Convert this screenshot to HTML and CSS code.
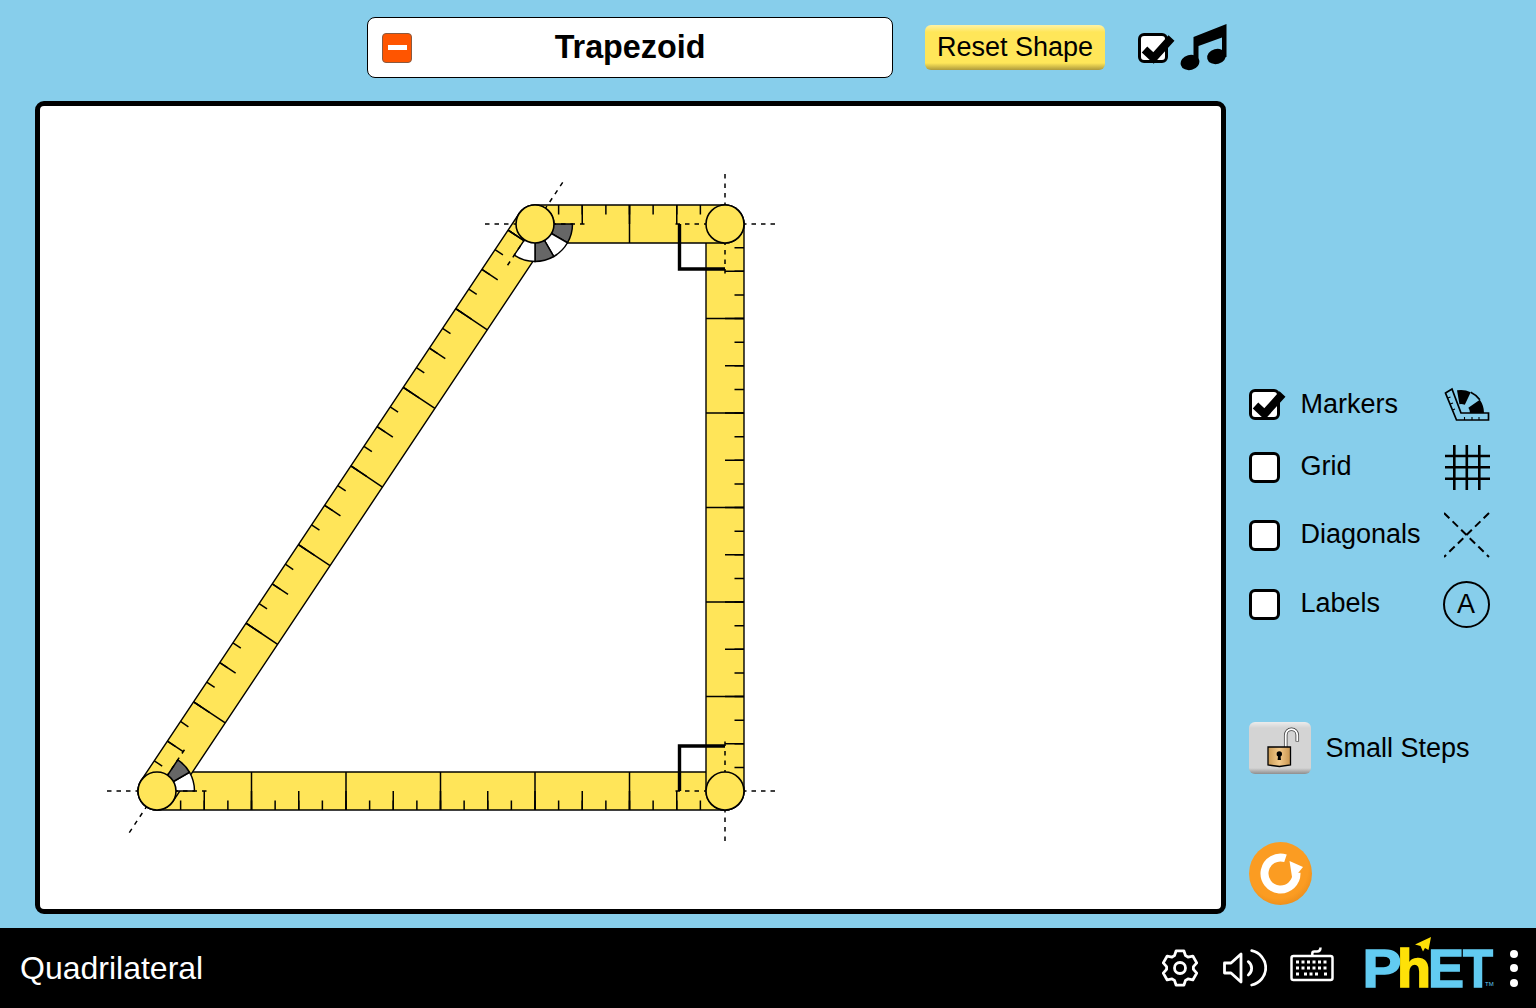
FILE: index.html
```html
<!DOCTYPE html>
<html>
<head>
  <meta charset="utf-8">
  <title>Quadrilateral</title>
  <link rel="stylesheet" href="styles.css">
</head>
<body>
  <div id="app">
    <div id="sim">
      <div id="play-column">
        <div id="top-row">
          <div class="title-panel">
            <span class="minus-button"><span class="minus-bar"></span></span>
            <span class="title-text">Trapezoid</span>
          </div>
          <button class="reset-shape">Reset Shape</button>
          <span class="check-box small checked">
            <svg class="check-mark" viewBox="0 0 40 36"><path d="M3.500 16.500 L12.500 25 L30.500 5"/></svg>
          </span>
          <svg class="music" viewBox="1180 25 48 47">
            <ellipse cx="1190" cy="63.500" rx="9.500" ry="7.500" transform="rotate(-15 1190 63.500)"/>
            <ellipse cx="1216.500" cy="57.500" rx="9.500" ry="7.500" transform="rotate(-15 1216.500 57.500)"/>
            <path d="M1193.500 64 V38 L1226.500 25 V58 H1222 V38.500 L1198.500 47 V64 Z"/>
          </svg>
        </div>

        <div id="board">
          <svg id="shape" viewBox="40 106 1181 803">
            <!-- each side runs along local x, ticks hang off local -y -->
            <g transform="translate(157 791) scale(1 -1)">
              <line class="edge" x2="568"/><line class="fill" x2="568"/>
              <line class="tick-q" x1="22.875" x2="568" y1="-14.250" y2="-14.250"/>
              <line class="tick-h" x1="46.500" x2="568" y1="-9.500" y2="-9.500"/>
              <line class="tick-f" x1="93.750" x2="568"/>
            </g>
            <g transform="translate(725 224) rotate(90)">
              <line class="edge" x2="567"/><line class="fill" x2="567"/>
              <line class="tick-q" x1="22.875" x2="567" y1="-14.250" y2="-14.250"/>
              <line class="tick-h" x1="46.500" x2="567" y1="-9.500" y2="-9.500"/>
              <line class="tick-f" x1="93.750" x2="567"/>
            </g>
            <g transform="translate(535 224)">
              <line class="edge" x2="190"/><line class="fill" x2="190"/>
              <line class="tick-q" x1="22.875" x2="190" y1="-14.250" y2="-14.250"/>
              <line class="tick-h" x1="46.500" x2="190" y1="-9.500" y2="-9.500"/>
              <line class="tick-f" x1="93.750" x2="190"/>
            </g>
            <g transform="translate(157 791) rotate(-56.310)">
              <line class="edge" x2="681.400"/><line class="fill" x2="681.400"/>
              <line class="tick-q" x1="22.875" x2="681.400" y1="-14.250" y2="-14.250"/>
              <line class="tick-h" x1="46.500" x2="681.400" y1="-9.500" y2="-9.500"/>
              <line class="tick-f" x1="93.750" x2="681.400"/>
            </g>

            <!-- angle wedges -->
            <path class="wedge-dark" d="M535 224 L572.500 224 A37.500 37.500 0 0 1 567.500 242.750 Z"/>
            <path class="wedge-light" d="M535 224 L567.500 242.750 A37.500 37.500 0 0 1 553.750 256.500 Z"/>
            <path class="wedge-dark" d="M535 224 L553.750 256.500 A37.500 37.500 0 0 1 535 261.500 Z"/>
            <path class="wedge-light" d="M535 224 L535 261.500 A37.500 37.500 0 0 1 514.200 255.200 Z"/>
            <path class="wedge-light" d="M157 791 L194.500 791 A37.500 37.500 0 0 0 189.500 772.250 Z"/>
            <path class="wedge-dark" d="M157 791 L189.500 772.250 A37.500 37.500 0 0 0 177.800 759.800 Z"/>

            <!-- vertex guides -->
            <line class="guide" x1="485" y1="224" x2="585" y2="224"/>
            <line class="guide" x1="562.700" y1="182.400" x2="507.300" y2="265.600"/>
            <line class="guide" x1="775" y1="224" x2="675" y2="224"/>
            <line class="guide" x1="725" y1="174" x2="725" y2="274"/>
            <line class="guide" x1="775" y1="791" x2="675" y2="791"/>
            <line class="guide" x1="725" y1="841" x2="725" y2="741"/>
            <line class="guide" x1="107" y1="791" x2="207" y2="791"/>
            <line class="guide" x1="129.300" y1="832.600" x2="184.700" y2="749.400"/>

            <!-- right angle markers -->
            <path class="right-angle" d="M725 269 H679.500 V224"/>
            <path class="right-angle" d="M725 746 H679.500 V791"/>

            <circle class="vertex" cx="535" cy="224" r="19"/>
            <circle class="vertex" cx="725" cy="224" r="19"/>
            <circle class="vertex" cx="725" cy="791" r="19"/>
            <circle class="vertex" cx="157" cy="791" r="19"/>
          </svg>
        </div>
      </div>

      <div id="controls">
        <div class="toggles">
          <div class="toggle">
            <span class="check-box checked">
              <svg class="check-mark" viewBox="0 0 40 36"><path d="M3.500 16.500 L12.500 25 L30.500 5"/></svg>
            </span>
            <span class="toggle-label">Markers</span>
            <svg class="icon-markers" viewBox="1444 387 46 35">
              <path class="wedge-ink" d="M1484 413 A23 23 0 0 0 1479.840 399.810 L1468.370 407.840 A9 9 0 0 1 1470 413 Z"/>
              <path class="wedge-ink" d="M1470.720 392.150 A23 23 0 0 0 1457 390.350 L1459.440 404.140 A9 9 0 0 1 1464.800 404.840 Z"/>
              <path class="ruler-line" d="M1479.840 399.810 A23 23 0 0 0 1470.720 392.150"/>
              <path class="ruler-line" d="M1445.500 393 L1452 389 L1461 413 H1488.500 V420 H1456.500 Z"/>
              <path class="ruler-line thin" d="M1447.800 398 L1450.500 397 M1450.200 404 L1453 403 M1452.500 410 L1455 409 M1464.500 420 V417 M1472 420 V417 M1479 420 V417"/>
            </svg>
          </div>
          <div class="toggle">
            <span class="check-box"></span>
            <span class="toggle-label">Grid</span>
            <svg class="icon-grid" viewBox="1444 444 46 45">
              <path d="M1454.300 444 V489 M1466.800 444 V489 M1479.300 444 V489 M1445 455 H1490 M1445 466.300 H1490 M1445 477.700 H1490"/>
            </svg>
          </div>
          <div class="toggle">
            <span class="check-box"></span>
            <span class="toggle-label">Diagonals</span>
            <svg class="icon-diagonals" viewBox="1444 512 46 46">
              <path d="M1444 513 L1489 557 M1489 513 L1444 557"/>
            </svg>
          </div>
          <div class="toggle">
            <span class="check-box"></span>
            <span class="toggle-label">Labels</span>
            <span class="icon-label">A</span>
          </div>
        </div>

        <div class="small-steps">
          <div class="lock-button">
            <svg class="lock" viewBox="1260 726 40 44">
              <defs>
                <linearGradient id="brass" x1="0" y1="0" x2="1" y2="0">
                  <stop offset="0" stop-color="#c99a55"/>
                  <stop offset="0.5" stop-color="#f3c98a"/>
                  <stop offset="1" stop-color="#c8944f"/>
                </linearGradient>
              </defs>
              <path class="shackle-outer" d="M1285.700 747 V735 A5.800 5.800 0 0 1 1297.300 735 V741.500"/>
              <path class="shackle-inner" d="M1285.700 747 V735 A5.800 5.800 0 0 1 1297.300 735 V741"/>
              <path class="lock-body" fill="url(#brass)" d="M1268 747 H1290.500 V765 L1279.500 766.500 L1268 765 Z"/>
              <circle cx="1279.300" cy="754" r="2.700"/>
              <path d="M1278.300 754 H1280.300 L1281 760 H1277.600 Z"/>
            </svg>
          </div>
          <span class="toggle-label">Small Steps</span>
        </div>

        <div class="reset-all">
          <svg class="reset-arrow" viewBox="1248.500 842 63 63">
            <path d="M1285 858.300 A16 16 0 1 0 1296 873"/>
            <polygon points="1289,861 1302.500,867 1292,880"/>
          </svg>
        </div>
      </div>
    </div>

    <div id="navbar">
      <span class="sim-name">Quadrilateral</span>
      <svg class="nav-gear" viewBox="0 0 36 38">
        <polygon points="14.06,1.95 21.94,1.95 23.5,6.66 25.94,8.08 30.8,7.06 34.73,13.88 31.43,17.58 31.43,20.42 34.73,24.12 30.8,30.94 25.94,29.92 23.5,31.34 21.94,36.05 14.06,36.05 12.5,31.34 10.06,29.92 5.2,30.94 1.27,24.12 4.57,20.42 4.57,17.58 1.27,13.88 5.2,7.06 10.06,8.08 12.5,6.66"/>
        <circle cx="18" cy="19" r="5.500"/>
      </svg>
      <svg class="nav-sound" viewBox="1222 949 45 38">
        <path d="M1224.500 963 H1231 L1241 954 V982 L1231 973 H1224.500 Z"/>
        <path d="M1248.300 961.700 A8.300 8.300 0 0 1 1248.300 975"/>
        <path d="M1251.700 950.700 A17.500 17.500 0 0 1 1251.700 985"/>
      </svg>
      <svg class="nav-keys" viewBox="1290 946 44 36">
        <rect class="keys-case" x="1291.500" y="956" width="41" height="24" rx="2"/>
        <path class="keys-case" d="M1312.300 956 V953.500 Q1312.300 951.500 1314.300 951.500 H1317 Q1320.500 951.500 1320.500 947.500"/>
        <path class="keys-row" d="M1296 962 H1329 M1296 968 H1329"/>
        <path class="keys-row" d="M1296 974 H1300 M1304 974 H1320 M1324 974 H1329"/>
      </svg>
      <svg class="nav-logo" viewBox="1360 933 136 70">
        <text class="logo-blue" x="1362.500" y="987" textLength="39" lengthAdjust="spacingAndGlyphs">P</text>
        <text class="logo-yellow" x="1397" y="987" textLength="34" lengthAdjust="spacingAndGlyphs">h</text>
        <text class="logo-blue" x="1428" y="987" textLength="36" lengthAdjust="spacingAndGlyphs">E</text>
        <text class="logo-blue" x="1463" y="987" textLength="30" lengthAdjust="spacingAndGlyphs">T</text>
        <polygon class="logo-plane" points="1431,937 1415,944.500 1420.500,946 1423,951.500 1425,948 1428.500,950"/>
        <text class="logo-tm" x="1485" y="986">TM</text>
      </svg>
      <div class="nav-dots"><span></span><span></span><span></span></div>
    </div>
  </div>
</body>
</html>
```

FILE: styles.css
```css
*, *:before, *:after { box-sizing: border-box; }
html, body { height: 100%; }
body { margin: 0; padding: 0; font-family: "Liberation Sans", Arial, sans-serif; background-color: #87ceeb; color: #000; overflow: hidden; }
#app { display: flex; flex-direction: column; height: 100%; }
#sim { flex: 1; display: flex; flex-direction: row; }
#play-column { width: 1191px; margin-left: 35px; display: flex; flex-direction: column; }

/* top row */
#top-row { height: 95px; margin-bottom: 6px; padding-left: 332px; display: flex; align-items: center; }
#top-row > * { flex-shrink: 0; }
.title-panel {
  width: 526px;
  height: 61px;
  padding: 0 14px;
  display: grid;
  grid-template-columns: 30px 1fr 30px;
  align-items: center;
  background-color: #fff;
  border: 1.5px solid #000;
  border-radius: 8px;
}
.minus-button {
  width: 30px;
  height: 30px;
  display: flex;
  align-items: center;
  justify-content: center;
  background-color: #ff5500;
  border: 1px solid #8a5a40;
  border-radius: 4px;
}
.minus-bar { width: 19px; height: 5px; background-color: #fff; }
.title-text { font-size: 32.300px; font-weight: bold; text-align: center; }
.reset-shape {
  width: 180px;
  height: 45px;
  margin-left: 32px;
  padding: 0;
  font-family: inherit;
  font-size: 27px;
  color: #000;
  border: 0;
  border-radius: 6px;
  background: linear-gradient(to bottom, #fff2a6 0, #ffe659 7px, #ffe659 38px, #ae9a3c 45px);
}
.music { width: 48px; height: 47px; margin-left: 12px; }

/* checkboxes */
.check-box {
  position: relative;
  display: block;
  width: 31px;
  height: 31px;
  background-color: #fff;
  border: 3px solid #000;
  border-radius: 6px;
}
.check-box.small { width: 30px; height: 30px; margin-left: 33px; }
.check-mark { position: absolute; left: 0; top: -3px; width: 40px; height: 36px; overflow: visible; }
.check-mark path { fill: none; stroke: #000; stroke-width: 8px; stroke-linejoin: miter; }

/* board */
#board { height: 813px; background-color: #fff; border: 5px solid #000; border-radius: 9px; overflow: hidden; }
#shape { display: block; width: 1181px; height: 803px; }
#shape .edge { stroke: #000; stroke-width: 39.400px; stroke-linecap: round; }
#shape .fill { stroke: #ffe559; stroke-width: 36.600px; stroke-linecap: round; }
.tick-q, .tick-h, .tick-f { stroke: #000; }
.tick-q { stroke-width: 9.500px; stroke-dasharray: 1.500 22.125; }
.tick-h { stroke-width: 19px; stroke-dasharray: 1.500 45.750; }
.tick-f { stroke-width: 38px; stroke-dasharray: 1.500 93; }
.wedge-dark, .wedge-light { stroke: #000; stroke-width: 1.500px; }
.wedge-dark { fill: #666; }
.wedge-light { fill: #fff; }
.guide { stroke: #000; stroke-width: 1.500px; stroke-dasharray: 4.500 5; }
.right-angle { fill: none; stroke: #000; stroke-width: 3.400px; }
.vertex { fill: #ffe559; stroke: #000; stroke-width: 1.600px; }

/* right panel */
#controls { width: 241px; margin-left: 22.500px; padding-top: 387px; display: flex; flex-direction: column; }
.toggles { display: flex; flex-direction: column; gap: 22.500px; }
.toggle { display: grid; grid-template-columns: 31px 1fr 46px; column-gap: 21px; align-items: center; }
.toggle-label { font-size: 27px; line-height: 32px; }
.toggle .toggle-label { padding-bottom: 2px; }
.icon-markers { width: 46px; height: 35px; display: block; }
.wedge-ink { fill: #000; }
.ruler-line { fill: none; stroke: #000; stroke-width: 1.700px; }
.ruler-line.thin { stroke-width: 1.100px; }
.icon-grid { width: 46px; height: 45px; display: block; }
.icon-grid path { fill: none; stroke: #000; stroke-width: 2.600px; }
.icon-diagonals { width: 46px; height: 46px; display: block; }
.icon-diagonals path { fill: none; stroke: #000; stroke-width: 2px; stroke-dasharray: 7.500 4.500; }
.icon-label {
  width: 47px;
  height: 47px;
  margin-left: -1px;
  display: flex;
  align-items: center;
  justify-content: center;
  font-size: 27px;
  border: 2px solid #000;
  border-radius: 50%;
}

.small-steps { margin-top: 94px; display: flex; align-items: center; gap: 15px; }
.lock-button {
  width: 62px;
  height: 52.500px;
  display: flex;
  align-items: center;
  justify-content: center;
  border-radius: 6px;
  background: linear-gradient(to bottom, #ececec 0, #d4d4d4 6px, #d4d4d4 46px, #8e8e8e 52px);
}
.lock { width: 40px; height: 44px; }
.shackle-outer, .shackle-inner { fill: none; }
.shackle-outer { stroke: #333; stroke-width: 3.500px; }
.shackle-inner { stroke: #fff; stroke-width: 2px; }
.lock-body { stroke: #000; stroke-width: 1.300px; }

.reset-all {
  width: 63px;
  height: 63px;
  margin-top: 68px;
  border-radius: 50%;
  background: radial-gradient(circle at 46% 42%, #fb9c22 60%, #ea8d1c 78%, #a8651c 100%);
}
.reset-arrow { display: block; width: 63px; height: 63px; }
.reset-arrow path { fill: none; stroke: #fff; stroke-width: 8px; }
.reset-arrow polygon { fill: #fff; }

/* nav bar */
#navbar { height: 80px; padding-left: 20px; display: flex; align-items: center; background-color: #000; color: #fff; }
.sim-name { flex: 1; font-size: 32px; }
.nav-gear { width: 36px; height: 38px; }
.nav-gear polygon, .nav-gear circle { fill: none; stroke: #fff; stroke-width: 2.800px; stroke-linejoin: round; }
.nav-sound { width: 45px; height: 38px; margin-left: 24px; }
.nav-sound path { fill: none; stroke: #fff; stroke-width: 2.800px; stroke-linecap: round; stroke-linejoin: round; }
.nav-keys { width: 44px; height: 36px; margin-left: 23px; margin-top: -8px; }
.keys-case { fill: none; stroke: #fff; stroke-width: 2.500px; }
.keys-row { fill: none; stroke: #fff; stroke-width: 3px; stroke-dasharray: 3 2.500; }
.nav-logo { width: 136px; height: 70px; margin-left: 26px; }
.nav-logo text { font-family: "Liberation Sans", Arial, sans-serif; font-size: 54px; font-weight: bold; stroke-width: 1.500px; }
.logo-blue { fill: #62cbf1; stroke: #62cbf1; }
.logo-yellow { fill: #fee108; stroke: #fee108; }
.logo-plane { fill: #fee108; }
.nav-logo .logo-tm { font-size: 6px; font-weight: normal; fill: #62cbf1; stroke: none; }
.nav-dots { width: 8px; margin-left: 14px; margin-right: 18px; display: flex; flex-direction: column; gap: 6.500px; }
.nav-dots span { width: 8px; height: 8px; background-color: #fff; border-radius: 50%; }
```
